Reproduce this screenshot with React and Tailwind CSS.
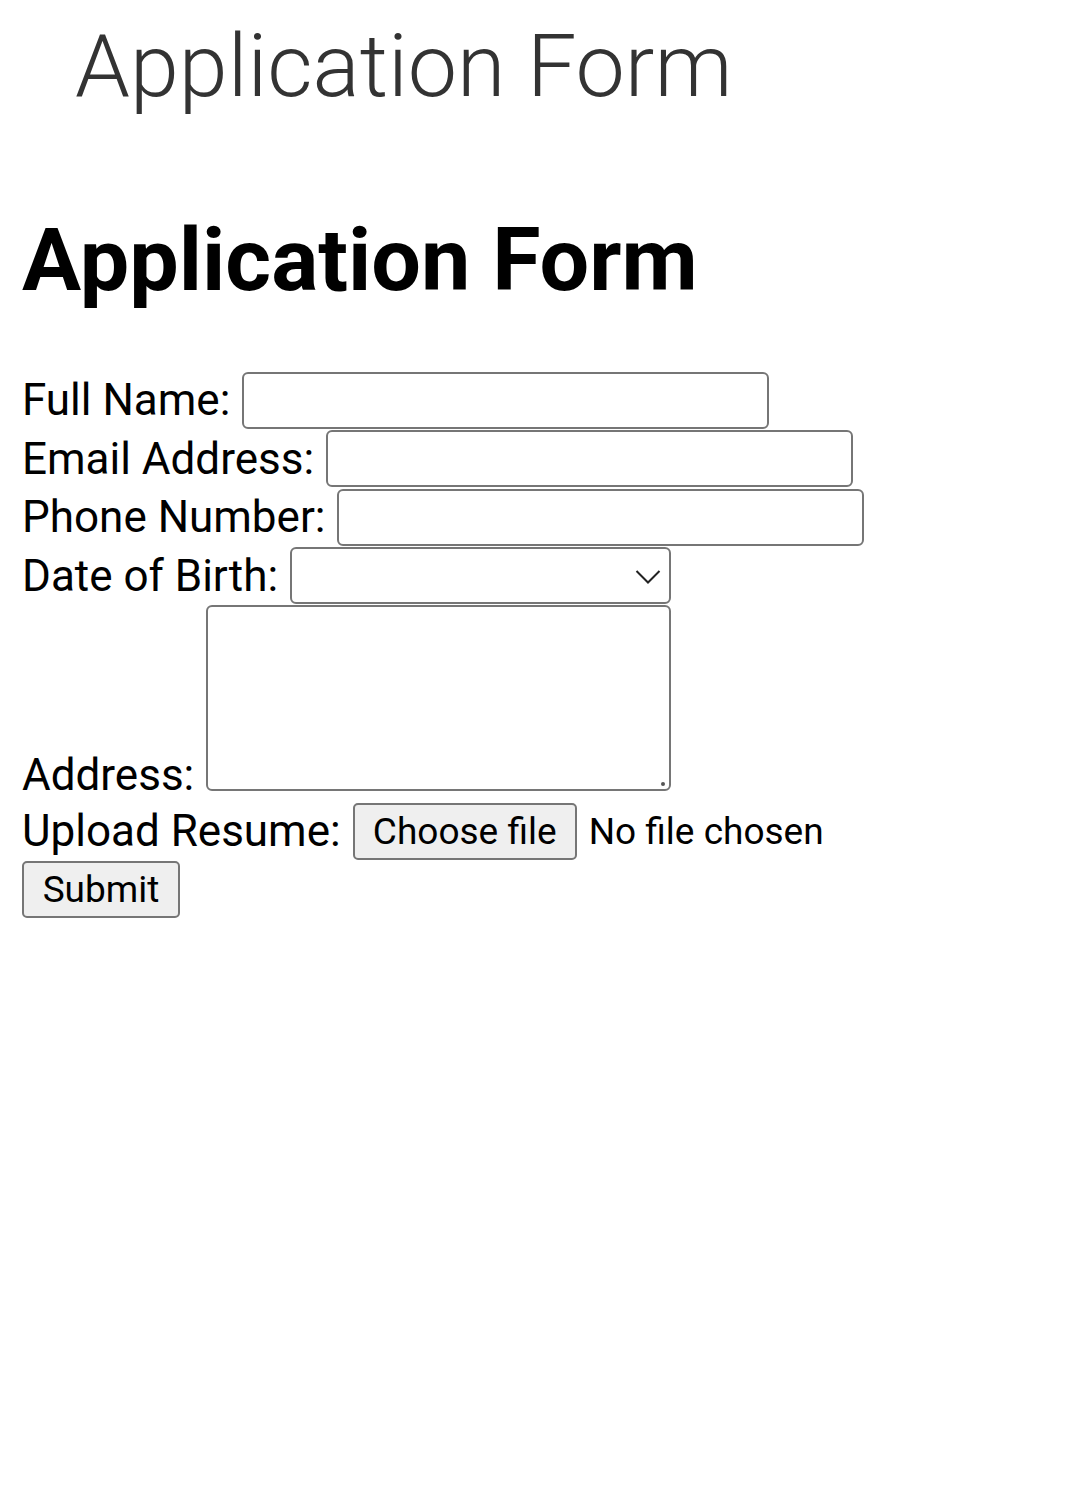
const field = 'h-[57px] w-[527px] shrink-0 rounded-[6px] border-2 border-[#767676] bg-white';

function Row({ label, children }) {
  return (
    <div className="flex h-[58.5px] items-center gap-[12px]">
      <span className="leading-none">{label}</span>
      {children}
    </div>
  );
}

export default function App() {
  return (
    <div className="min-h-[1499px] bg-white font-['Roboto','Liberation_Sans',sans-serif] text-black">
      <div className="pl-[75px] pt-[22px] text-[88px] font-light leading-none text-[#333]">Application Form</div>

      <div className="px-[22px]">
        <h1 className="mt-[106px] text-[88px] font-bold leading-none">Application Form</h1>

        <form className="mt-[67px] text-[44px]">
          <Row label="Full Name:">
            <div className={field} />
          </Row>
          <Row label="Email Address:">
            <div className={field} />
          </Row>
          <Row label="Phone Number:">
            <div className={field} />
          </Row>
          <Row label="Date of Birth:">
            <div className="flex h-[57px] w-[381px] shrink-0 items-center justify-end rounded-[6px] border-2 border-[#767676] bg-white pr-[8px]">
              <svg width="26" height="16" viewBox="0 0 26 16" fill="none" stroke="#222" strokeWidth="2" className="mt-[2px]">
                <polyline points="1.5,2 13,13.5 24.5,2" />
              </svg>
            </div>
          </Row>
          <div className="flex items-end gap-[12px]">
            <span className="mb-[-6px] leading-none">Address:</span>
            <div className="relative h-[186px] w-[465px] shrink-0 rounded-[6px] border-2 border-[#767676] bg-white">
              <span className="absolute bottom-[3px] right-[4px] h-[4px] w-[4px] rounded-full bg-[#555]" />
            </div>
          </div>
          <div className="mt-[11px] flex h-[58px] items-center gap-[12px]">
            <span className="leading-none">Upload Resume:</span>
            <div className="flex items-center gap-[12px] text-[37px]">
              <button type="button" className="h-[57px] w-[224px] rounded-[5px] border-2 border-[#767676] bg-[#efefef] leading-none">
                Choose file
              </button>
              <span className="leading-none">No file chosen</span>
            </div>
          </div>
          <button type="button" className="mt-[1px] block h-[57px] w-[158px] rounded-[5px] border-2 border-[#767676] bg-[#efefef] text-[37px] leading-none">
            Submit
          </button>
        </form>
      </div>
    </div>
  );
}
